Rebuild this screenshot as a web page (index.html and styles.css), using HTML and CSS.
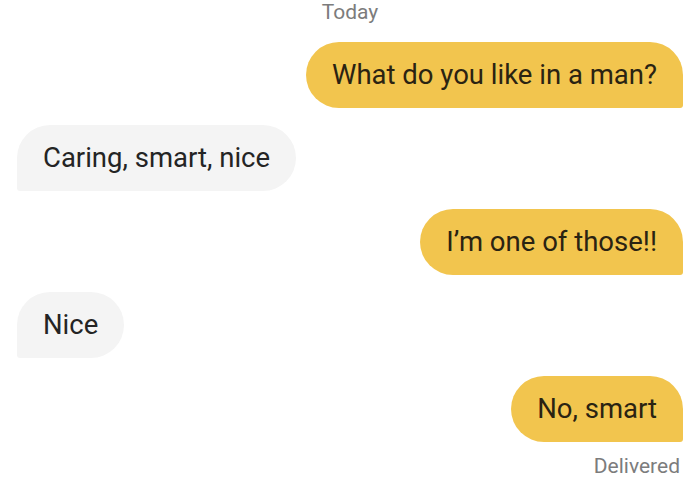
FILE: index.html
```html
<!DOCTYPE html>
<html>
<head>
<meta charset="utf-8">
<link rel="stylesheet" href="styles.css">
</head>
<body>
<div class="chat">
  <div class="day">Today</div>
  <div class="row sent"><div class="bubble">What do you like in a man?</div></div>
  <div class="row recv"><div class="bubble">Caring, smart, nice</div></div>
  <div class="row sent"><div class="bubble">I’m one of those!!</div></div>
  <div class="row recv"><div class="bubble">Nice</div></div>
  <div class="row sent"><div class="bubble">No, smart</div></div>
  <div class="status">Delivered</div>
</div>
</body>
</html>
```
FILE: styles.css
```css
html, body {
  margin: 0;
  background: #ffffff;
}
.chat {
  width: 700px;
  height: 500px;
  box-sizing: border-box;
  padding: 0 17px;
  display: flex;
  flex-direction: column;
  gap: 17.5px;
  font-family: Roboto, "Liberation Sans", sans-serif;
  overflow: hidden;
}
.day {
  text-align: center;
  font-size: 21px;
  line-height: 24px;
  color: #7c7c7c;
}
.row {
  display: flex;
}
.row.sent { justify-content: flex-end; }
.row.recv { justify-content: flex-start; }
.bubble {
  height: 66px;
  line-height: 66px;
  padding: 0 26px;
  font-size: 27.5px;
  color: #242424;
  white-space: nowrap;
}
.sent .bubble {
  background: #f2c54e;
  border-radius: 33px 33px 3px 33px;
  color: #2a2312;
}
.recv .bubble {
  background: #f4f4f4;
  border-radius: 33px 33px 33px 3px;
}
.status {
  margin-top: -5px;
  text-align: right;
  padding-right: 3px;
  font-size: 21px;
  line-height: 24px;
  color: #7c7c7c;
}
```
